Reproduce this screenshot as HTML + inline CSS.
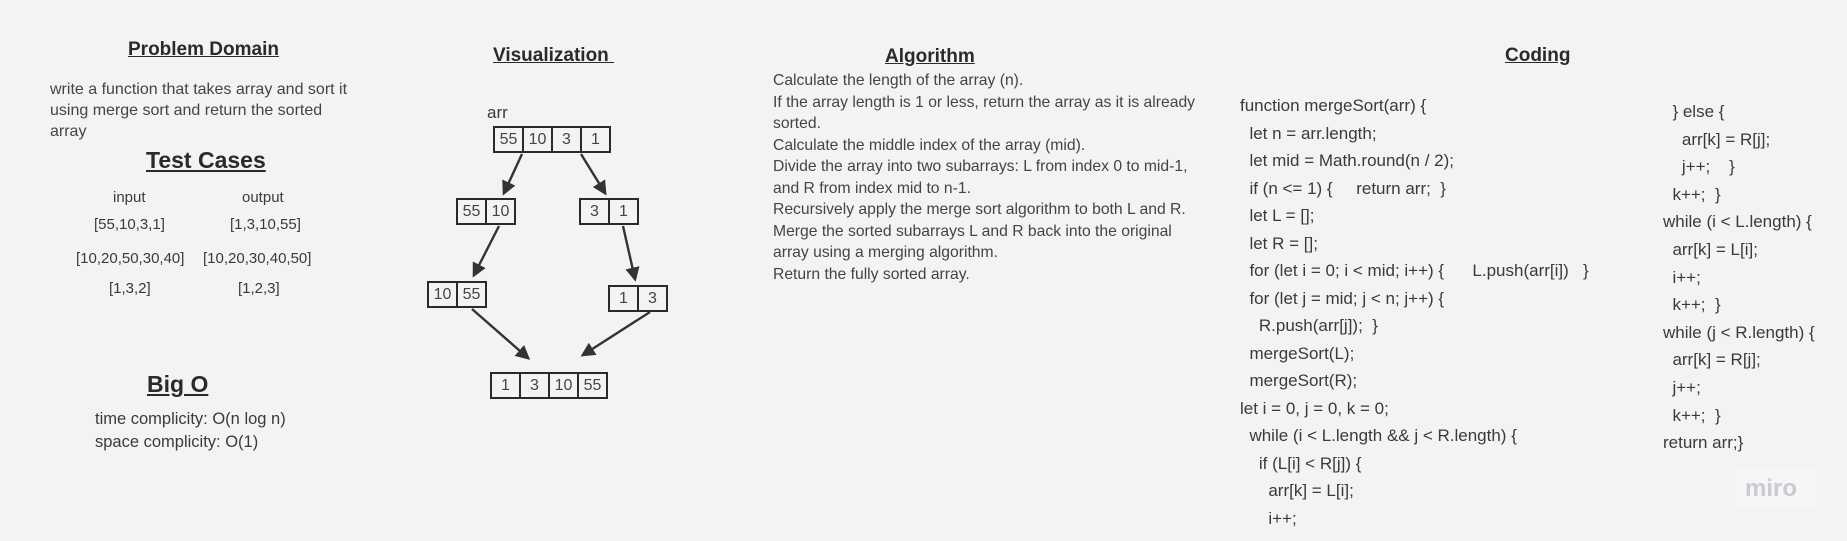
<!DOCTYPE html>
<html><head><meta charset="utf-8"><style>
html,body{margin:0;padding:0}
body{width:1847px;height:541px;background:#f3f3f3;position:relative;overflow:hidden;font-family:"Liberation Sans",sans-serif;color:#3a3a3a}
.a{position:absolute;white-space:pre;line-height:20px}
.h{font-weight:bold;text-decoration:underline;color:#2a2a2a;font-size:19px;line-height:24px}
.t{font-size:15px;line-height:20px}
.c{font-size:17px;line-height:22px}
.box{position:absolute;display:flex;border:2px solid #2a2a2a}
.box span{width:27px;height:23px;border-right:2px solid #2a2a2a;text-align:center;font-size:16px;line-height:23px;color:#444}
.box span:last-child{border-right:none}
</style></head><body>
<div class="a h" style="left:128px;top:38px">Problem Domain</div>
<div class="a t" style="left:50px;top:79px;line-height:21px;color:#444;font-size:16px">write a function that takes array and sort it
using merge sort and return the sorted
array</div>
<div class="a h" style="left:146px;top:146px;font-size:23px;line-height:28px">Test Cases</div>
<div class="a t" style="left:113px;top:188px">input</div>
<div class="a t" style="left:242px;top:188px">output</div>
<div class="a t" style="left:94px;top:215px">[55,10,3,1]</div>
<div class="a t" style="left:230px;top:215px">[1,3,10,55]</div>
<div class="a t" style="left:76px;top:249px">[10,20,50,30,40]</div>
<div class="a t" style="left:203px;top:249px">[10,20,30,40,50]</div>
<div class="a t" style="left:109px;top:279px">[1,3,2]</div>
<div class="a t" style="left:238px;top:279px">[1,2,3]</div>
<div class="a h" style="left:147px;top:370px;font-size:23px;line-height:28px">Big O</div>
<div class="a t" style="left:95px;top:408px;line-height:23px;font-size:16.5px">time complicity: O(n log n)
space complicity: O(1)</div>

<div class="a h" style="left:493px;top:44px">Visualization&nbsp;</div>
<div class="a" style="left:487px;top:103px;font-size:17px">arr</div>
<div class="box" style="left:493px;top:126px"><span>55</span><span>10</span><span>3</span><span>1</span></div>
<div class="box" style="left:456px;top:198px"><span>55</span><span>10</span></div>
<div class="box" style="left:579px;top:198px"><span>3</span><span>1</span></div>
<div class="box" style="left:427px;top:281px"><span>10</span><span>55</span></div>
<div class="box" style="left:608px;top:285px"><span>1</span><span>3</span></div>
<div class="box" style="left:490px;top:372px"><span>1</span><span>3</span><span>10</span><span>55</span></div>
<svg style="position:absolute;left:0;top:0" width="1847" height="541">
<defs><marker id="m" viewBox="0 0 10 10" refX="8" refY="5" markerWidth="6" markerHeight="6" orient="auto"><path d="M0 0L10 5L0 10z" fill="#333"/></marker></defs>
<g stroke="#333" stroke-width="2.4" marker-end="url(#m)">
<line x1="522" y1="154" x2="504" y2="193"/>
<line x1="581" y1="154" x2="605" y2="193"/>
<line x1="499" y1="226" x2="474" y2="275"/>
<line x1="623" y1="226" x2="635" y2="279"/>
<line x1="472" y1="309" x2="528" y2="358"/>
<line x1="650" y1="312" x2="583" y2="355"/>
</g></svg>

<div class="a h" style="left:885px;top:45px">Algorithm</div>
<div class="a t" style="left:773px;top:70px;line-height:21.5px;color:#444;font-size:15.7px">Calculate the length of the array (n).
If the array length is 1 or less, return the array as it is already
sorted.
Calculate the middle index of the array (mid).
Divide the array into two subarrays: L from index 0 to mid-1,
and R from index mid to n-1.
Recursively apply the merge sort algorithm to both L and R.
Merge the sorted subarrays L and R back into the original
array using a merging algorithm.
Return the fully sorted array.</div>

<div class="a h" style="left:1505px;top:44px">Coding</div>
<div class="a c" style="left:1240px;top:92px;line-height:27.5px">function mergeSort(arr) {
  let n = arr.length;
  let mid = Math.round(n / 2);
  if (n &lt;= 1) {     return arr;  }
  let L = [];
  let R = [];
  for (let i = 0; i &lt; mid; i++) {      L.push(arr[i])   }
  for (let j = mid; j &lt; n; j++) {
    R.push(arr[j]);  }
  mergeSort(L);
  mergeSort(R);
let i = 0, j = 0, k = 0;
  while (i &lt; L.length &amp;&amp; j &lt; R.length) {
    if (L[i] &lt; R[j]) {
      arr[k] = L[i];
      i++;</div>
<div class="a c" style="left:1663px;top:98px;line-height:27.6px">  } else {
    arr[k] = R[j];
    j++;    }
  k++;  }
while (i &lt; L.length) {
  arr[k] = L[i];
  i++;
  k++;  }
while (j &lt; R.length) {
  arr[k] = R[j];
  j++;
  k++;  }
return arr;}</div>
<div style="position:absolute;left:1736px;top:470px;width:80px;height:36px;background:#f6f6f6;border-radius:4px"></div>
<div class="a" style="left:1745px;top:476px;font-size:24px;line-height:26px;font-weight:bold;color:#cacad3">miro</div>
</body></html>
